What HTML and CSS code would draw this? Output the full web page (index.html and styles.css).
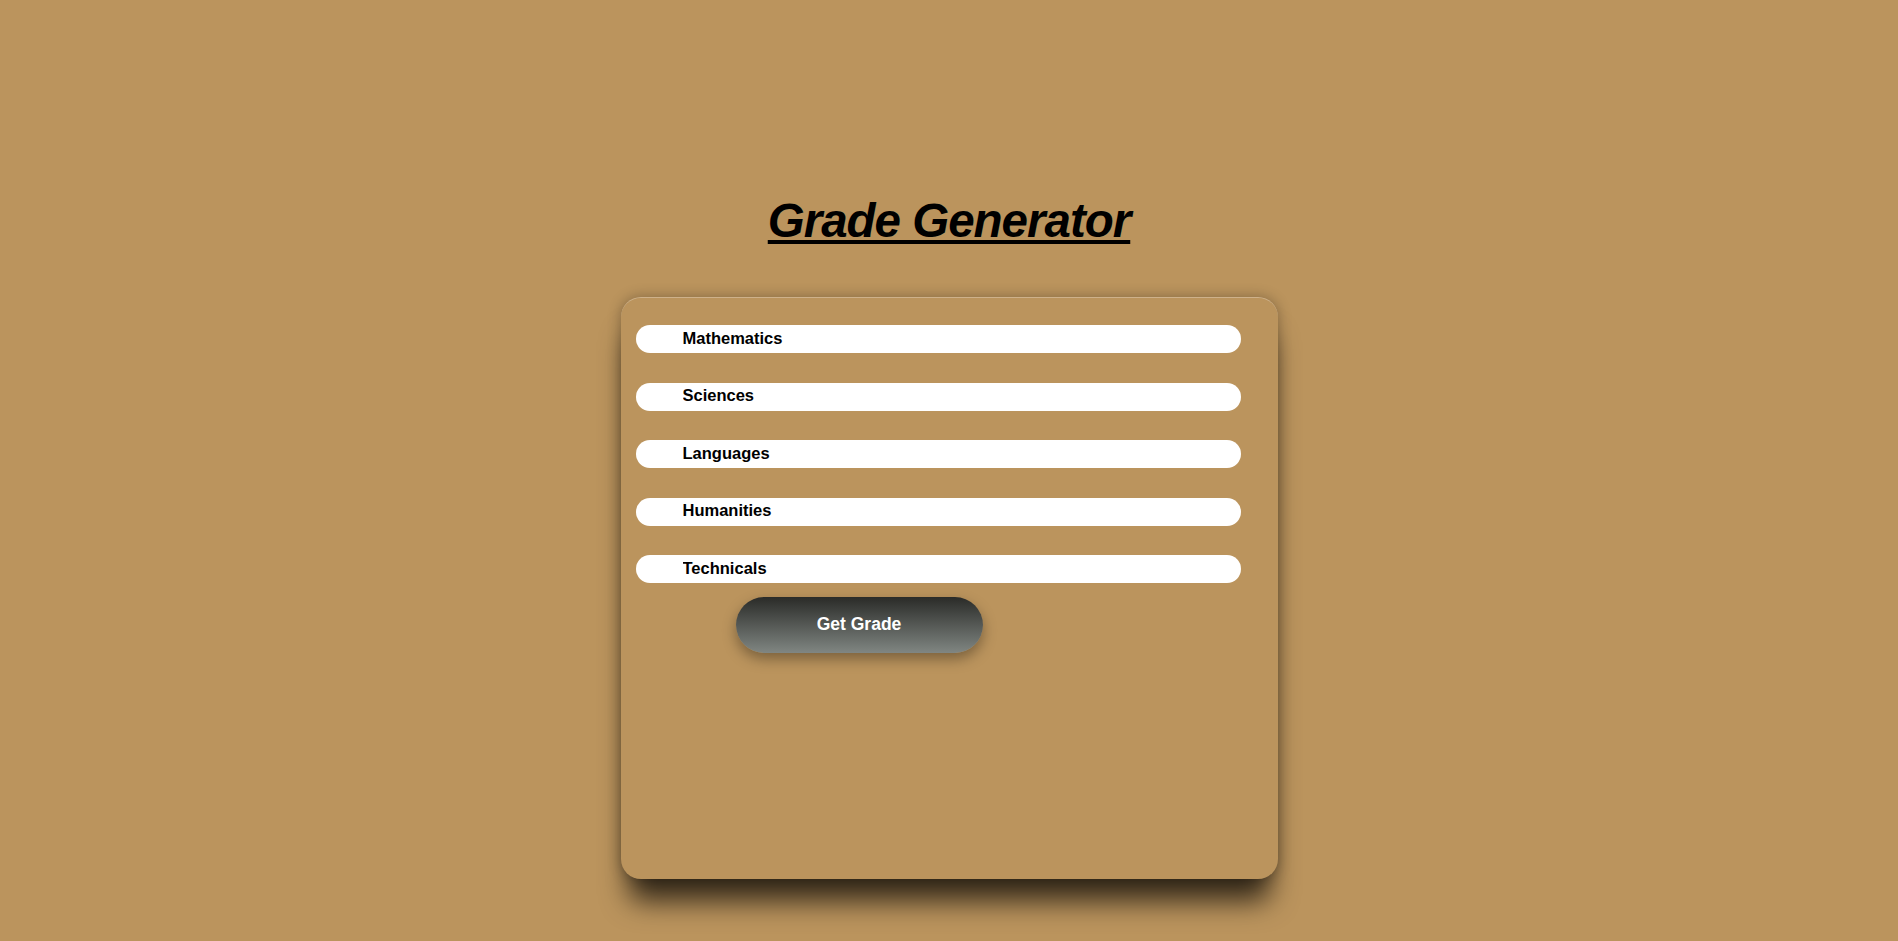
FILE: index.html
```html
<!DOCTYPE html>
<html lang="en">
<head>
<meta charset="utf-8">
<title>Grade Generator</title>
<link rel="stylesheet" href="styles.css">
</head>
<body>
<main class="page">
  <h1 class="title">Grade Generator</h1>
  <form class="card">
    <div class="fields">
      <input class="field" type="text" placeholder="Mathematics">
      <input class="field" type="text" placeholder="Sciences">
      <input class="field" type="text" placeholder="Languages">
      <input class="field" type="text" placeholder="Humanities">
      <input class="field" type="text" placeholder="Technicals">
    </div>
    <button class="btn" type="button">Get Grade</button>
  </form>
</main>
</body>
</html>
```

FILE: styles.css
```css
* { box-sizing: border-box; }

html, body {
  margin: 0;
  padding: 0;
  background: #bb945d;
  font-family: "Liberation Sans", Arial, sans-serif;
}

.page {
  display: flex;
  flex-direction: column;
  align-items: center;
  padding-top: 195px;
  min-height: 941px;
}

.title {
  margin: 0 0 50px;
  font-size: 47.5px;
  line-height: 52px;
  letter-spacing: -1px;
  font-weight: 700;
  font-style: italic;
  color: #000;
  text-decoration: underline;
  text-decoration-thickness: 4px;
  text-underline-offset: 3px;
}

.card {
  width: 657px;
  height: 582px;
  background: #bb945d;
  border-radius: 20px;
  border-top: 1px solid rgba(255, 255, 255, 0.28);
  box-shadow: 0 30px 28px -8px rgba(0, 0, 0, 0.72), 0 0 14px rgba(0, 0, 0, 0.3);
  padding: 27px 0 0 15px;
  display: flex;
  flex-direction: column;
}

.fields {
  display: flex;
  flex-direction: column;
  gap: 29.5px;
}

.field {
  width: 605px;
  height: 28px;
  border: none;
  outline: none;
  border-radius: 14px;
  background: #fff;
  padding: 0 0 2px 47px;
  font-family: "Liberation Sans", Arial, sans-serif;
  font-size: 16.5px;
  font-weight: 700;
  color: #000;
}

.field::placeholder {
  color: #000;
  opacity: 1;
}

.btn {
  margin: 14px 0 0 100px;
  width: 247px;
  height: 56px;
  border: none;
  border-radius: 28px;
  padding: 0 0 2px;
  background: linear-gradient(to bottom, #2a2b28, #808682);
  color: #fff;
  font-family: "Liberation Sans", Arial, sans-serif;
  font-size: 17.5px;
  font-weight: 700;
  box-shadow: 0 6px 14px rgba(0, 0, 0, 0.35);
  cursor: pointer;
}
```
